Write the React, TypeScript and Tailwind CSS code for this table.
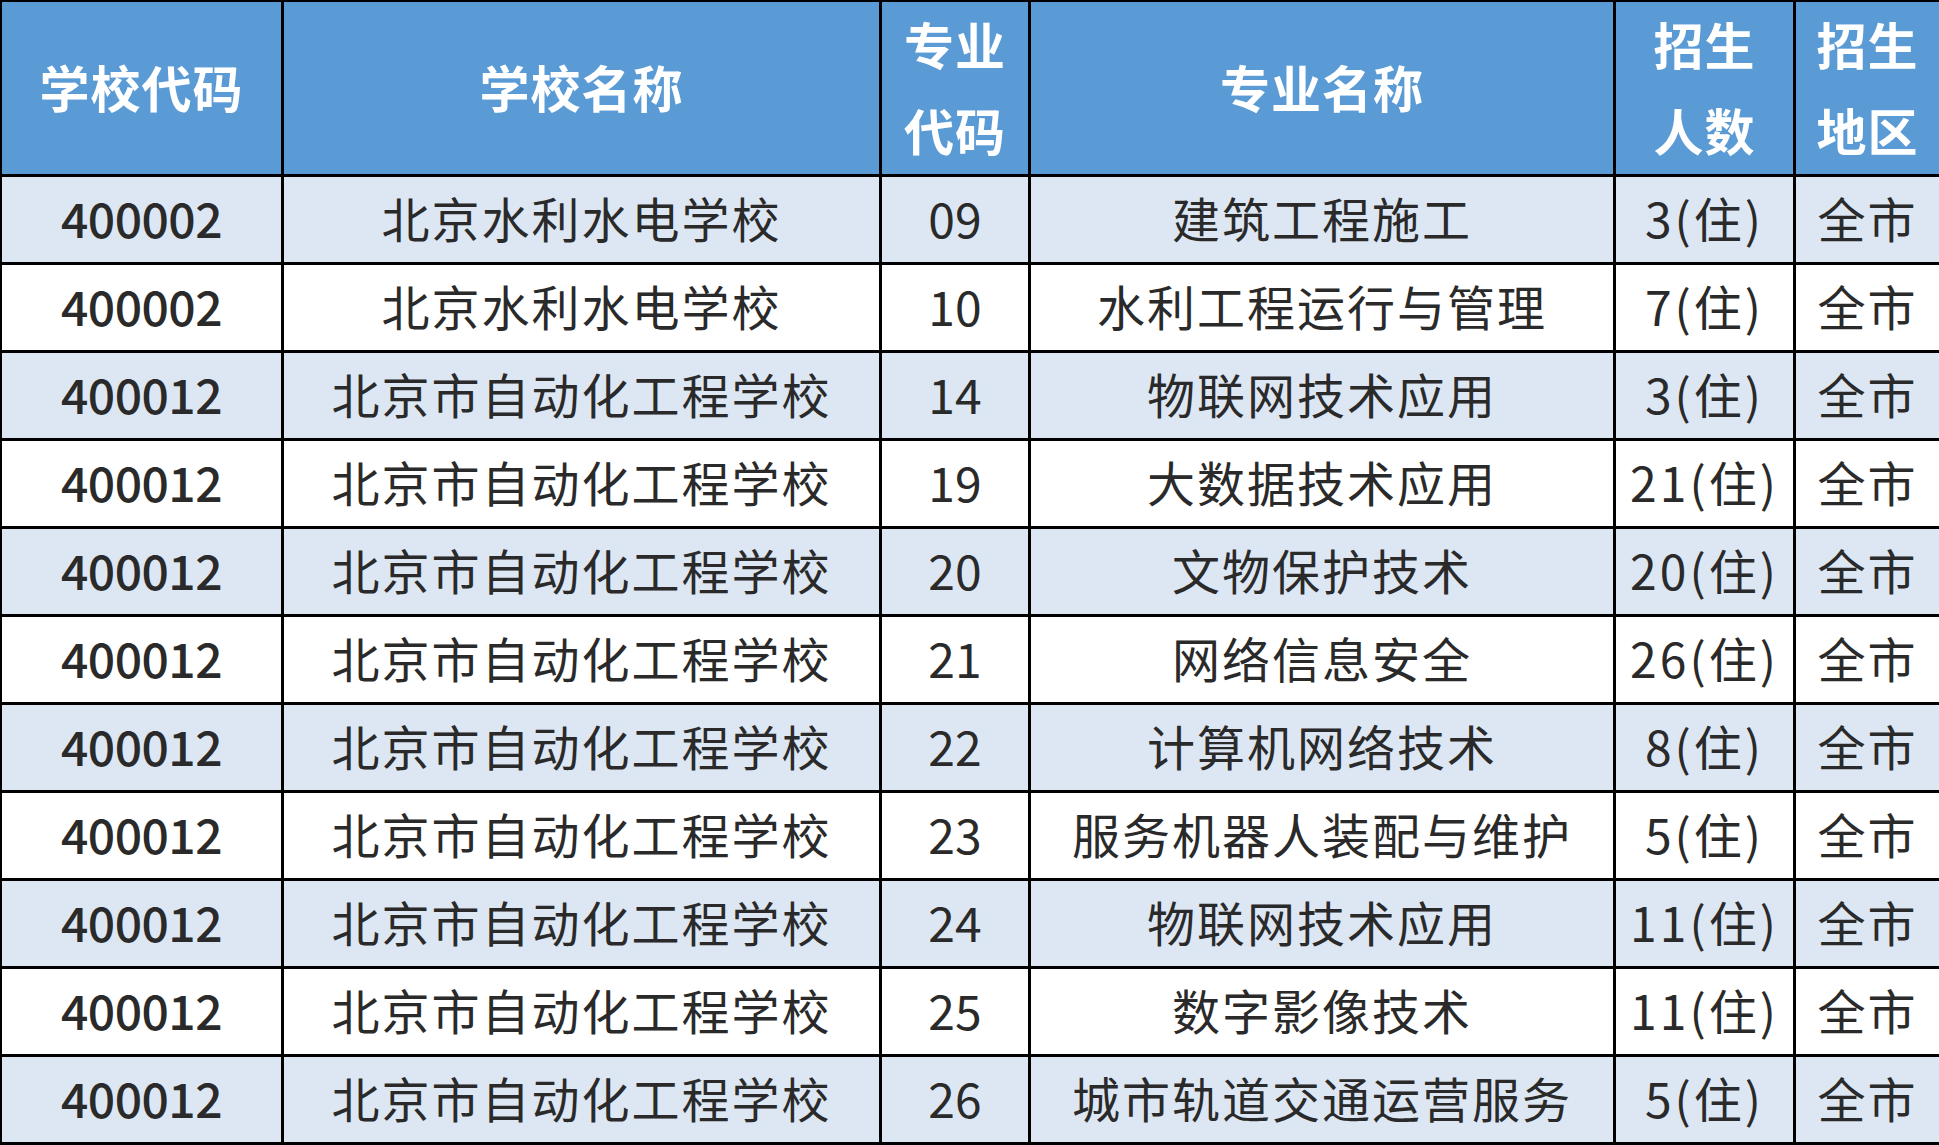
const rows: [string, string, string, string, string][] = [
  ["400002", "北京水利水电学校", "09", "建筑工程施工", "3"],
  ["400002", "北京水利水电学校", "10", "水利工程运行与管理", "7"],
  ["400012", "北京市自动化工程学校", "14", "物联网技术应用", "3"],
  ["400012", "北京市自动化工程学校", "19", "大数据技术应用", "21"],
  ["400012", "北京市自动化工程学校", "20", "文物保护技术", "20"],
  ["400012", "北京市自动化工程学校", "21", "网络信息安全", "26"],
  ["400012", "北京市自动化工程学校", "22", "计算机网络技术", "8"],
  ["400012", "北京市自动化工程学校", "23", "服务机器人装配与维护", "5"],
  ["400012", "北京市自动化工程学校", "24", "物联网技术应用", "11"],
  ["400012", "北京市自动化工程学校", "25", "数字影像技术", "11"],
  ["400012", "北京市自动化工程学校", "26", "城市轨道交通运营服务", "5"],
];

const font = { fontFamily: '"Noto Sans CJK SC", "Noto Sans", sans-serif' };

function HeadCell({ lines }: { lines: string[] }) {
  return (
    <div className="flex flex-col items-center justify-center bg-[#5b9bd5] pb-[5px] text-[50px] font-bold leading-[86px] text-white tracking-[1px]">
      {lines.map((l) => (
        <span key={l}>{l}</span>
      ))}
    </div>
  );
}

function Cell({ children, light, extra = "" }: { children: React.ReactNode; light: boolean; extra?: string }) {
  return (
    <div
      className={`flex items-center justify-center pb-[6px] text-[48px] leading-none text-[#2a2a2a] ${
        light ? "bg-[#dde7f4]" : "bg-white"
      } ${extra}`}
    >
      {children}
    </div>
  );
}

export default function App() {
  return (
    <div
      className="grid h-[1145px] w-[1939px] grid-cols-[279px_595px_146px_582px_177px_1fr] grid-rows-[172px_repeat(11,85px)] gap-[3px] overflow-hidden bg-black pt-[2px] pb-[3px] pl-[2px]"
      style={font}
    >
      <HeadCell lines={["学校代码"]} />
      <HeadCell lines={["学校名称"]} />
      <HeadCell lines={["专业", "代码"]} />
      <HeadCell lines={["专业名称"]} />
      <HeadCell lines={["招生", "人数"]} />
      <HeadCell lines={["招生", "地区"]} />
      {rows.map((r, i) => {
        const light = i % 2 === 0;
        return [
          <Cell key={`a${i}`} light={light} extra="font-medium tracking-[-0.5px]">{r[0]}</Cell>,
          <Cell key={`b${i}`} light={light} extra="tracking-[2px]">{r[1]}</Cell>,
          <Cell key={`c${i}`} light={light}>{r[2]}</Cell>,
          <Cell key={`d${i}`} light={light} extra="tracking-[2px]">{r[3]}</Cell>,
          <Cell key={`e${i}`} light={light} extra="tracking-[3px]">
            {r[4]}({"住"})
          </Cell>,
          <Cell key={`f${i}`} light={light} extra="tracking-[2px]">全市</Cell>,
        ];
      })}
    </div>
  );
}
